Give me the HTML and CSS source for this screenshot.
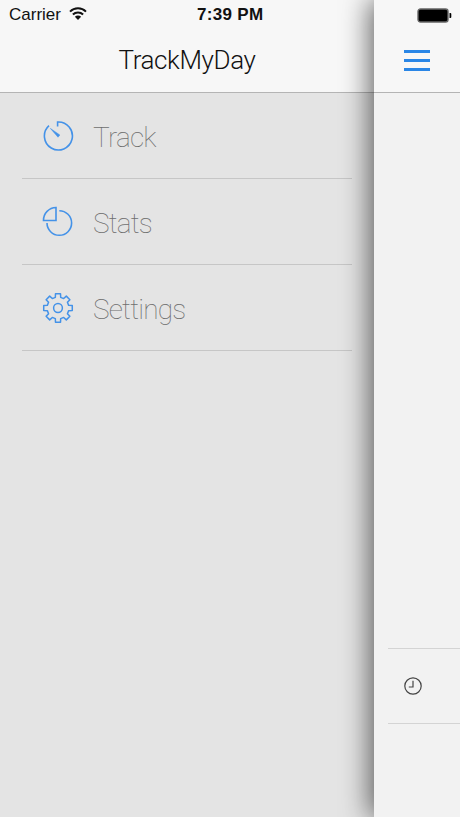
FILE: index.html
```html
<!DOCTYPE html>
<html lang="en">
<head>
  <meta charset="UTF-8">
  <meta name="viewport" content="width=device-width, initial-scale=1.0">
  <title>TrackMyDay</title>
  <link rel="stylesheet" href="styles.css">
</head>
<body>
  <div class="app">
    <div class="menu">
      <div class="topbar">
        <div class="status">
          <span class="carrier">Carrier</span>
          <svg class="wifi" width="18" height="13" viewBox="0 0 18 13">
            <path d="M1 4.6a11.4 11.4 0 0 1 16 0" fill="none" stroke="#111" stroke-width="2"/>
            <path d="M3.9 7.5a7.3 7.3 0 0 1 10.2 0" fill="none" stroke="#111" stroke-width="2"/>
            <path d="M9 13 5.9 9.8a4.4 4.4 0 0 1 6.2 0z" fill="#111"/>
          </svg>
          <span class="time">7:39 PM</span>
        </div>
        <div class="title">TrackMyDay</div>
      </div>
      <ul class="nav">
        <li class="nav-item">
          <svg class="nav-icon" width="32" height="32" viewBox="0 0 32 32" fill="none" stroke="#4492e8" stroke-width="1.6">
            <path d="M7 5.6A14 14 0 1 0 15.6 2V6.6"/>
            <path d="M8.4 8.4 17.9 15 16 17.2z" fill="#4492e8" stroke-width="0.5"/>
          </svg>
          <span>Track</span>
        </li>
        <li class="nav-item">
          <svg class="nav-icon" width="32" height="32" viewBox="0 0 32 32" fill="none" stroke="#4492e8" stroke-width="1.6">
            <path d="M17.3 4.7A12.3 12.3 0 1 1 5 17"/>
            <path d="M14 1.5V14.5H1.5A12.8 12.8 0 0 1 14 1.5z"/>
          </svg>
          <span>Stats</span>
        </li>
        <li class="nav-item">
          <svg class="nav-icon" width="32" height="32" viewBox="0 0 32 32" fill="none" stroke="#4492e8" stroke-width="1.5" stroke-linejoin="round">
            <path transform="translate(16 16)" d="M-2.52-14.28H2.52L2.66-10.67 5.67-9.43 8.32-11.88 11.88-8.32 9.43-5.67 10.67-2.66 14.28-2.52V2.52L10.67 2.66 9.43 5.67 11.88 8.32 8.32 11.88 5.67 9.43 2.66 10.67 2.52 14.28H-2.52L-2.66 10.67-5.67 9.43-8.32 11.88-11.88 8.32-9.43 5.67-10.67 2.66-14.28 2.52V-2.52L-10.67-2.66-9.43-5.67-11.88-8.32-8.32-11.88-5.67-9.43-2.66-10.67z"/>
            <circle cx="16" cy="16" r="4.4"/>
          </svg>
          <span>Settings</span>
        </li>
      </ul>
    </div>
    <div class="panel">
      <div class="topbar panel-top">
        <svg class="battery" width="35" height="15" viewBox="0 0 35 15">
          <rect x="1" y="1" width="30" height="13" rx="2.5" fill="#000" stroke="#666" stroke-width="1.4"/>
          <path d="M32.5 5h.8a1 1 0 0 1 1 1v3a1 1 0 0 1-1 1h-.8z" fill="#000"/>
        </svg>
        <div class="burger">
          <span></span>
          <span></span>
          <span></span>
        </div>
      </div>
      <div class="panel-row">
        <svg width="18" height="18" viewBox="0 0 18 18" fill="none" stroke="#444" stroke-width="1.2">
          <circle cx="9" cy="9" r="8.2"/>
          <path d="M9 3.8V10H4.8"/>
        </svg>
      </div>
    </div>
  </div>
</body>
</html>
```

FILE: styles.css
```css
html, body {
  margin: 0;
  padding: 0;
}
body {
  font-family: Roboto, "Liberation Sans", sans-serif;
  background: #e4e4e4;
}
.app {
  display: flex;
  width: 460px;
  height: 817px;
  overflow: hidden;
}
.menu {
  width: 374px;
  flex: none;
  background: #e4e4e4;
}
.topbar {
  height: 92px;
  background: #f7f7f7;
  border-bottom: 1px solid #b4b4b4;
}
.status {
  position: relative;
  display: flex;
  align-items: center;
  height: 30px;
  padding-left: 9px;
  font-family: "Liberation Sans", sans-serif;
  font-size: 17px;
  color: #111;
}
.wifi {
  margin-left: 8px;
  margin-top: -3px;
}
.time {
  position: absolute;
  left: 197px;
  font-weight: 700;
  letter-spacing: 0.3px;
}
.title {
  margin-top: 5px;
  text-align: center;
  font-size: 26px;
  font-weight: 300;
  letter-spacing: -0.4px;
  line-height: 50px;
  color: #111;
}
.nav {
  list-style: none;
  margin: 0 22px;
  padding: 0;
}
.nav-item {
  display: flex;
  align-items: center;
  gap: 19px;
  height: 85px;
  padding-left: 20px;
  border-bottom: 1px solid #c6c6c6;
  font-size: 28px;
  font-weight: 100;
  letter-spacing: -0.8px;
  color: #6e6e6e;
}
.nav-item span {
  margin-top: 3px;
}
.panel {
  position: relative;
  z-index: 2;
  width: 86px;
  flex: none;
  background: #f2f2f2;
  box-shadow: -4px 0 28px rgba(0, 0, 0, 0.6);
}
.panel-top {
  height: 84px;
  padding-top: 8px;
  background: #f7f7f7;
}
.battery {
  display: block;
  margin-left: 43px;
}
.burger {
  display: flex;
  flex-direction: column;
  gap: 6.5px;
  margin: 27px 0 0 30px;
}
.burger span {
  display: block;
  width: 26px;
  height: 2.5px;
  background: #2a86e6;
}
.panel-row {
  display: flex;
  align-items: center;
  height: 74px;
  margin: 555px 0 0 14px;
  padding-left: 16px;
  border-top: 1px solid #d4d4d4;
  border-bottom: 1px solid #d4d4d4;
}
```
